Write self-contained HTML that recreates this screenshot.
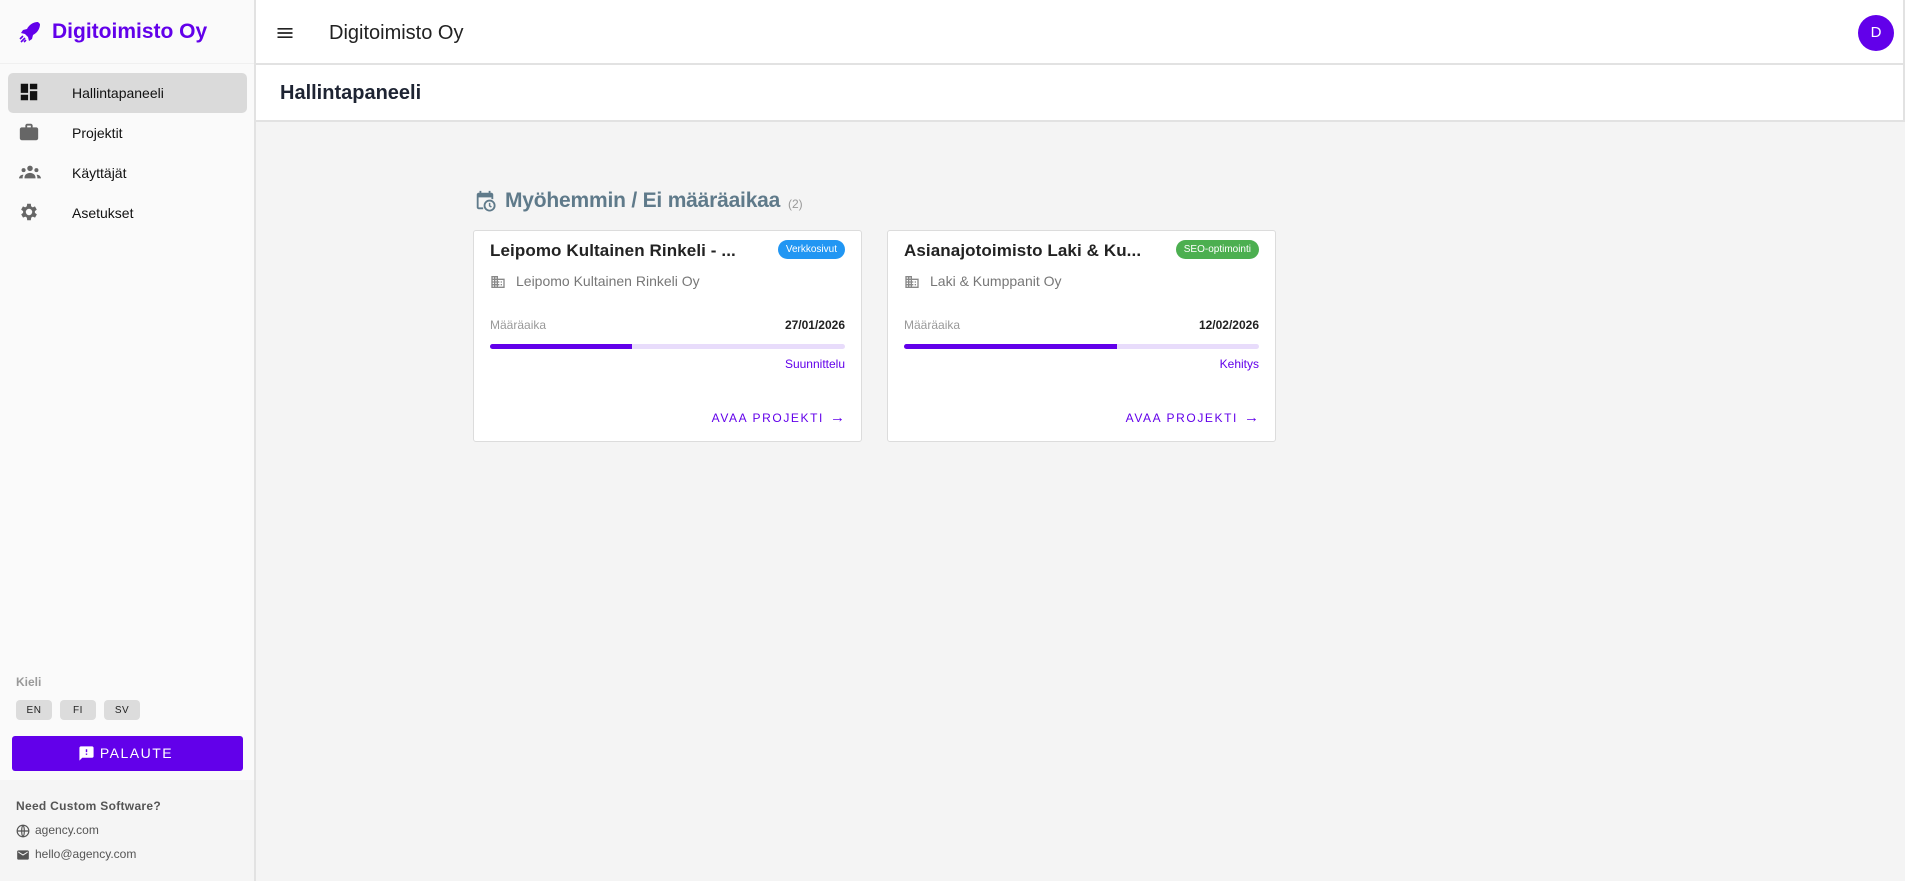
<!DOCTYPE html>
<html><head><meta charset="utf-8"><style>
*{box-sizing:border-box;margin:0;padding:0}
body{width:1905px;height:881px;overflow:hidden;font-family:"Liberation Sans",sans-serif;background:#f4f4f4;position:relative;color:#222}
.abs{position:absolute}
#side{left:0;top:0;width:256px;height:881px;background:#fafafa;border-right:2px solid #e2e2e2}
#sidebot{left:0;top:780px;width:254px;height:101px;background:#f5f5f5}
.nav{position:absolute;left:8px;width:239px;height:40px;border-radius:5px;font-size:14px;line-height:40px;padding-left:64px;color:#111}
.nav svg{position:absolute;left:10px;top:8px}
#hdr{left:256px;top:0;width:1649px;height:65px;background:#fff;border-bottom:2px solid #e2e2e2;border-right:2px solid #e2e2e2}
#ptitle{left:256px;top:65px;width:1649px;height:57px;background:#fff;border-bottom:2px solid #e2e2e2;border-right:2px solid #e2e2e2}
.card{position:absolute;top:230px;width:389px;height:212px;background:#fff;border:1px solid #dcdcdc;border-radius:3px}
.ct{position:absolute;left:16px;top:10px;font-size:17px;font-weight:bold;color:#222;letter-spacing:.1px}
.badge{position:absolute;right:16px;top:9px;height:19px;border-radius:10px;color:#fff;font-size:10px;line-height:19px;padding:0 8px}
.co{position:absolute;left:16px;top:42px;font-size:14px;color:#777;padding-left:26px}
.co svg{position:absolute;left:0;top:1px}
.ml{position:absolute;left:16px;top:87px;font-size:12px;color:#999}
.md{position:absolute;right:16px;top:87px;font-size:12px;font-weight:bold;color:#222}
.bar{position:absolute;left:16px;right:16px;top:113px;height:5px;border-radius:3px;background:#e8dcfb;overflow:hidden}
.bar div{height:5px;background:#6200ea}
.st{position:absolute;right:16px;top:126px;font-size:12px;color:#6200ea}
.av{position:absolute;right:16px;top:178px;font-size:12px;color:#6200ea;letter-spacing:1.6px}
.av span{font-size:15px;letter-spacing:0;margin-left:6px}
.lang{position:absolute;top:700px;width:36px;height:20px;border-radius:4px;background:#dcdcdc;font-size:10px;text-align:center;line-height:21px;letter-spacing:.5px}
</style></head><body>
<div id="side" class="abs"></div>
<div id="sidebot" class="abs"></div>
<svg class="abs" style="left:17px;top:20px" width="26" height="24" viewBox="0 0 24 24" fill="#6200ea"><path d="M20 2c-5 0-9 3-11 7l-4 1-2 3 4 1 3 3 1 4 3-2 1-4c4-2 7-6 7-11z"/><path d="M5 16l-3 3M7 18l-4 4M8 20l-2 2" stroke="#6200ea" stroke-width="1.6"/></svg>
<div class="abs" style="left:52px;top:20px;font-size:21px;font-weight:bold;color:#6200ea">Digitoimisto Oy</div>
<div class="abs" style="left:0;top:63px;width:254px;height:1px;background:#f0f0f0"></div>
<div class="nav" style="top:73px;background:#dadada"><svg width="22" height="22" viewBox="0 0 24 24" fill="#111"><path d="M3 13h8V3H3v10zm0 8h8v-6H3v6zm10 0h8V11h-8v10zm0-18v6h8V3h-8z"/></svg>Hallintapaneeli</div>
<div class="nav" style="top:113px"><svg width="22" height="22" viewBox="0 0 24 24" fill="#666"><path d="M20 7h-4V5c0-1-1-2-2-2h-4C9 3 8 4 8 5v2H4C3 7 2 8 2 9v10c0 1 1 2 2 2h16c1 0 2-1 2-2V9c0-1-1-2-2-2zm-6 0h-4V5h4v2z"/></svg>Projektit</div>
<div class="nav" style="top:153px"><svg width="24" height="22" viewBox="0 0 24 24" fill="#666"><circle cx="12" cy="8" r="3"/><circle cx="5" cy="10" r="2.2"/><circle cx="19" cy="10" r="2.2"/><path d="M6 18c0-3 3-5 6-5s6 2 6 5v1H6zM0 19c0-2 2-4 4-4l1 .2C4 16 4 17 4 19zM24 19c0-2-2-4-4-4l-1 .2c1 .8 1 1.8 1 3.8z"/></svg>Käyttäjät</div>
<div class="nav" style="top:193px"><svg width="22" height="22" viewBox="0 0 24 24" fill="#666"><path d="M19.4 13a7.5 7.5 0 000-2l2.1-1.6-2-3.5-2.5 1a7 7 0 00-1.7-1L15 3h-4l-.4 2.9a7 7 0 00-1.7 1l-2.5-1-2 3.5L6.6 11a7.5 7.5 0 000 2l-2.1 1.6 2 3.5 2.5-1a7 7 0 001.7 1L11 21h4l.4-2.9a7 7 0 001.7-1l2.5 1 2-3.5zM13 15.5a3.5 3.5 0 110-7 3.5 3.5 0 010 7z" transform="translate(-1 0)"/></svg>Asetukset</div>
<div class="abs" style="left:16px;top:675px;font-size:12px;font-weight:bold;color:#999">Kieli</div>
<div class="lang" style="left:16px">EN</div><div class="lang" style="left:60px">FI</div><div class="lang" style="left:104px">SV</div>
<div class="abs" style="left:12px;top:736px;width:231px;height:35px;background:#6200ea;border-radius:3px;color:#fff;font-size:14px;letter-spacing:1.5px;line-height:35px;text-align:center;padding-left:18px"><svg style="position:absolute;left:66px;top:9px" width="17" height="17" viewBox="0 0 24 24" fill="#fff"><path d="M20 2H4C3 2 2 3 2 4v18l4-4h14c1 0 2-1 2-2V4c0-1-1-2-2-2zm-7 12h-2v-2h2v2zm0-4h-2V6h2v4z"/></svg>PALAUTE</div>
<div class="abs" style="left:16px;top:799px;font-size:12px;font-weight:bold;color:#555;letter-spacing:.3px">Need Custom Software?</div>
<svg class="abs" style="left:16px;top:824px" width="14" height="14" viewBox="0 0 24 24" fill="none" stroke="#555" stroke-width="2"><circle cx="12" cy="12" r="10"/><path d="M2 12h20M12 2c3 3 3 17 0 20M12 2c-3 3-3 17 0 20"/></svg>
<div class="abs" style="left:35px;top:823px;font-size:12px;color:#555">agency.com</div>
<svg class="abs" style="left:16px;top:848px" width="14" height="14" viewBox="0 0 24 24" fill="#555"><path d="M20 4H4C3 4 2 5 2 6v12c0 1 1 2 2 2h16c1 0 2-1 2-2V6c0-1-1-2-2-2zm0 4l-8 5-8-5V6l8 5 8-5z"/></svg>
<div class="abs" style="left:35px;top:847px;font-size:12px;color:#555">hello@agency.com</div>

<div id="hdr" class="abs"></div>
<svg class="abs" style="left:274px;top:23px" width="22" height="20" viewBox="0 0 24 24" fill="#222"><path d="M3 18h18v-2H3zm0-5h18v-2H3zm0-7v2h18V6z"/></svg>
<div class="abs" style="left:329px;top:22px;font-size:20px;color:#222">Digitoimisto Oy</div>
<div class="abs" style="left:1858px;top:15px;width:36px;height:36px;border-radius:50%;background:#6200ea;color:#fff;font-size:15px;text-align:center;line-height:36px">D</div>
<div id="ptitle" class="abs"></div>
<div class="abs" style="left:280px;top:82px;font-size:20px;font-weight:bold;color:#1e2433">Hallintapaneeli</div>

<svg class="abs" style="left:474px;top:190px" width="22" height="22" viewBox="0 0 24 24" fill="#5f7a8a"><path d="M19 3h-1V1h-2v2H8V1H6v2H5C4 3 3 4 3 5v14c0 1 1 2 2 2h5v-2H5V8h14v2h2V5c0-1-1-2-2-2z"/><circle cx="17" cy="17" r="5.5" fill="none" stroke="#5f7a8a" stroke-width="2"/><path d="M17 14v3.3l2 1.3" stroke="#5f7a8a" stroke-width="1.6" fill="none"/></svg>
<div class="abs" style="left:505px;top:189px;font-size:21px;font-weight:bold;color:#5f7a8a;letter-spacing:-.2px">Myöhemmin / Ei määräaikaa</div>
<div class="abs" style="left:788px;top:197px;font-size:12px;color:#999">(2)</div>

<div class="card" style="left:473px">
<div class="ct">Leipomo Kultainen Rinkeli - ...</div>
<div class="badge" style="background:#2196f3">Verkkosivut</div>
<div class="co"><svg width="16" height="16" viewBox="0 0 24 24" fill="#888"><path d="M12 7V3H2v18h20V7H12zM6 19H4v-2h2v2zm0-4H4v-2h2v2zm0-4H4V9h2v2zm0-4H4V5h2v2zm4 12H8v-2h2v2zm0-4H8v-2h2v2zm0-4H8V9h2v2zm0-4H8V5h2v2zm10 12h-8v-2h2v-2h-2v-2h2v-2h-2V9h8v10zm-2-8h-2v2h2v-2zm0 4h-2v2h2v-2z"/></svg>Leipomo Kultainen Rinkeli Oy</div>
<div class="ml">Määräaika</div><div class="md">27/01/2026</div>
<div class="bar"><div style="width:40%"></div></div>
<div class="st">Suunnittelu</div>
<div class="av">AVAA PROJEKTI<span>→</span></div>
</div>
<div class="card" style="left:887px">
<div class="ct">Asianajotoimisto Laki &amp; Ku...</div>
<div class="badge" style="background:#4caf50">SEO-optimointi</div>
<div class="co"><svg width="16" height="16" viewBox="0 0 24 24" fill="#888"><path d="M12 7V3H2v18h20V7H12zM6 19H4v-2h2v2zm0-4H4v-2h2v2zm0-4H4V9h2v2zm0-4H4V5h2v2zm4 12H8v-2h2v2zm0-4H8v-2h2v2zm0-4H8V9h2v2zm0-4H8V5h2v2zm10 12h-8v-2h2v-2h-2v-2h2v-2h-2V9h8v10zm-2-8h-2v2h2v-2zm0 4h-2v2h2v-2z"/></svg>Laki &amp; Kumppanit Oy</div>
<div class="ml">Määräaika</div><div class="md">12/02/2026</div>
<div class="bar"><div style="width:60%"></div></div>
<div class="st">Kehitys</div>
<div class="av">AVAA PROJEKTI<span>→</span></div>
</div>
</body></html>
